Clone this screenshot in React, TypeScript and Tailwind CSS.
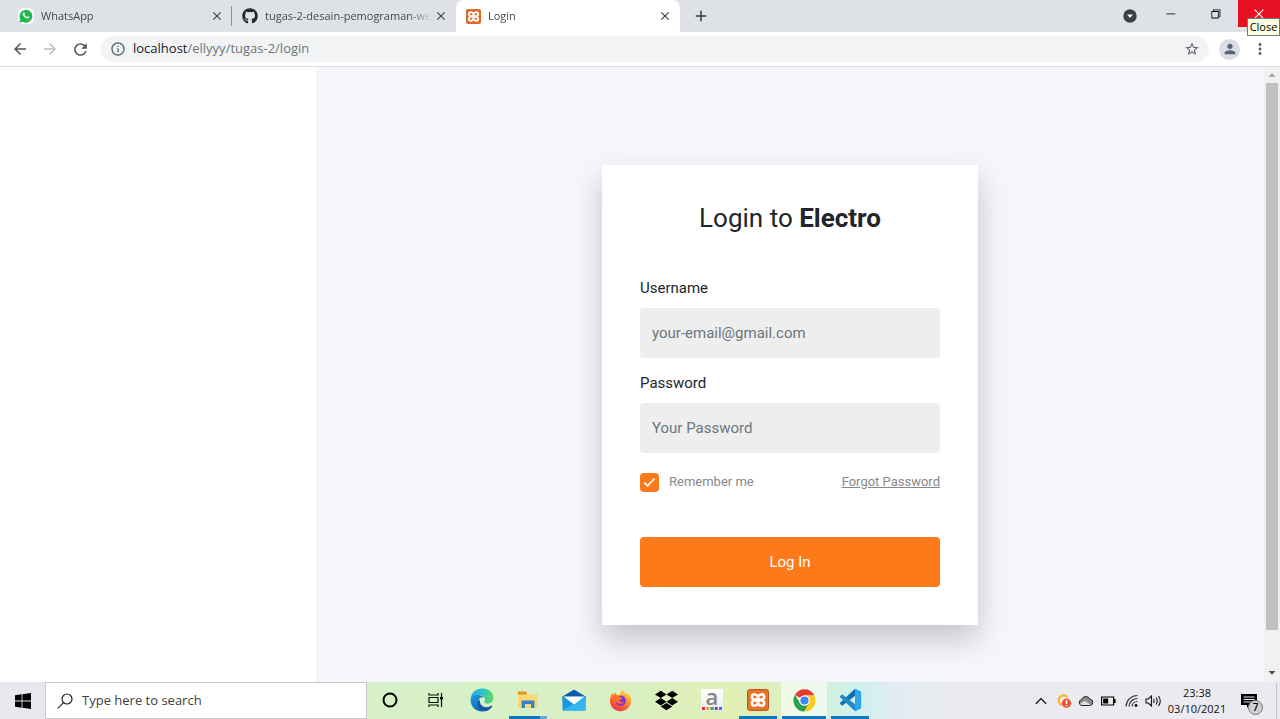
import type { ReactNode } from "react";
import {
  MdAdd,
  MdArrowBack,
  MdArrowForward,
  MdClose,
  MdInfoOutline,
  MdMoreVert,
  MdPerson,
  MdRefresh,
  MdStarBorder,
} from "react-icons/md";
import { VscChromeClose, VscChromeMinimize, VscChromeRestore } from "react-icons/vsc";
import { FaDropbox, FaGithub } from "react-icons/fa";

function WhatsAppIcon() {
  return (
    <svg viewBox="0 0 16 16" className="size-4 shrink-0">
      <rect width="16" height="16" rx="5" fill="#fff" />
      <path d="M1.3 14.8l1-3.6A6.4 6.4 0 1 1 4.8 13.8z" fill="#1fb84a" />
      <path
        d="M5.4 4.4c.4-.4.9-.3 1 0l.6 1.3c.1.3-.6.9-.5 1.1.5 1 1.3 1.700 2.300 2.100.3.1.8-.9 1.100-.7l1.300.6c.4.200.1 1-.3 1.300-.8.6-1.800.5-3-.1C6.300 9.200 5.200 8 4.800 6.700c-.3-1 0-1.800.6-2.300z"
        fill="#fff"
      />
    </svg>
  );
}

function XamppIcon({ large = false }: { large?: boolean }) {
  return (
    <span
      className={
        large
          ? "flex size-[22px] items-center justify-center rounded-[3px] border border-[#b9551c] bg-[#ea7426]"
          : "flex size-[15px] shrink-0 items-center justify-center rounded-[2px] bg-[#dd6b26]"
      }
    >
      <svg viewBox="0 0 22 22" className="size-full" fill="none" stroke="#fff" strokeWidth="2.8" strokeLinejoin="round">
        <path d="M8.200 11H6.800Q4.200 9.800 4.200 7.400 4.300 4.700 7 4.600 9 4.600 11 7 13 4.600 15 4.600 17.700 4.700 17.800 7.400 17.800 9.800 15.200 11 17.800 12.200 17.800 14.600 17.700 17.300 15 17.400 13 17.400 11 15 9 17.400 7 17.400 4.300 17.300 4.200 14.600 4.200 12.200 6.800 11M13.800 11h1.400M8.500 8.800Q11 12.200 13.500 8.800M8.500 13.200Q11 9.800 13.500 13.200" />
      </svg>
    </span>
  );
}

function Tab({ icon, title, active = false, divider = false }: { icon: ReactNode; title: string; active?: boolean; divider?: boolean }) {
  return (
    <div
      className={
        active
          ? "flex h-8 w-56 items-center rounded-t-lg bg-white pr-[7px] pl-[10px]"
          : "flex h-8 w-56 items-center pr-[7px] pl-[10px]"
      }
    >
      <button className="flex min-w-0 flex-1 items-center gap-[7px] text-left text-[11px] text-[#45494d]">
        {icon}
        <span className="flex-1 whitespace-nowrap [mask-image:linear-gradient(to_right,black_85%,transparent)]">{title}</span>
      </button>
      <button aria-label="Close tab" className="flex size-4 items-center justify-center text-[#3c4043]">
        <MdClose className="size-[14px]" />
      </button>
      {divider && <span className="-mr-[7px] ml-[6px] h-5 w-px bg-[#8d9196]" />}
    </div>
  );
}

function TabStrip() {
  return (
    <header className="flex h-8 shrink-0 items-start bg-[#dee1e6]">
      <nav className="flex pl-2">
        <Tab icon={<WhatsAppIcon />} title="WhatsApp" divider />
        <Tab icon={<FaGithub className="size-4 shrink-0 text-[#24292e]" />} title="tugas-2-desain-pemograman-we" />
        <Tab icon={<XamppIcon />} title="Login" active />
      </nav>
      <button aria-label="New tab" className="ml-[5px] flex size-8 items-center justify-center text-[#3c4043]">
        <MdAdd className="size-[18px]" />
      </button>
      <div className="ml-auto flex text-black">
        <button aria-label="Search tabs" className="flex h-8 w-9 items-center justify-center">
          <svg viewBox="0 0 14 14" className="size-[14px]">
            <circle cx="7" cy="7" r="6.7" fill="#3c4043" />
            <path d="M4 5.4h6L7 9z" fill="#fff" />
          </svg>
        </button>
        <button aria-label="Minimize" className="flex h-[27px] w-[45px] items-center justify-center">
          <VscChromeMinimize className="size-[13px]" />
        </button>
        <button aria-label="Restore" className="flex h-[27px] w-[45px] items-center justify-center">
          <VscChromeRestore className="size-[13px]" />
        </button>
        <div className="relative">
          <button aria-label="Close" className="flex h-[27px] w-[42px] items-center justify-center bg-[#e81123] text-white">
            <VscChromeClose className="size-[14px]" />
          </button>
          <span role="tooltip" className="absolute top-[18px] right-0 flex h-[18px] w-[33px] items-center justify-center border border-[#767676] bg-[#ffffe1] text-[11px] text-black">
            Close
          </span>
        </div>
      </div>
    </header>
  );
}

function Toolbar() {
  return (
    <div className="flex h-[35px] shrink-0 items-center border-b border-[#dcdee0] bg-white pr-[11px] pl-[10px] text-[#5f6368]">
      <div className="flex w-[91px] gap-[10px]">
        <button aria-label="Back" className="flex size-5 items-center justify-center text-[#50545a]">
          <MdArrowBack className="size-[18px]" />
        </button>
        <button aria-label="Forward" className="flex size-5 items-center justify-center text-[#babcbe]">
          <MdArrowForward className="size-[18px]" />
        </button>
        <button aria-label="Reload" className="flex size-5 items-center justify-center text-[#50545a]">
          <MdRefresh className="size-[19px]" />
        </button>
      </div>
      <div className="flex h-[26px] flex-1 items-center gap-[7px] rounded-full bg-[#f1f3f4] px-[9px]">
        <MdInfoOutline className="size-4" />
        <a href="#login" className="flex-1 text-[13px] text-[#70757a]">
          <span className="text-[#202124]">localhost</span>/ellyyy/tugas-2/login
        </a>
        <button aria-label="Bookmark this page">
          <MdStarBorder className="size-4" />
        </button>
      </div>
      <button aria-label="Profile" className="ml-[10px] flex size-[21px] items-center justify-center rounded-full bg-[#dadde3] text-[#56627a]">
        <MdPerson className="size-4" />
      </button>
      <button aria-label="Menu" className="ml-[11px]">
        <MdMoreVert className="size-[18px]" />
      </button>
    </div>
  );
}

function Field({ id, label, type, placeholder }: { id: string; label: string; type: string; placeholder: string }) {
  return (
    <div className="mb-[14px]">
      <label htmlFor={id} className="mb-2 block text-[15px] leading-[23px] text-[#212529]">
        {label}
      </label>
      <input
        id={id}
        type={type}
        placeholder={placeholder}
        className="block h-[50px] w-full rounded bg-[#eeeeee] px-3 text-[15px] text-[#495057] outline-none placeholder:text-[#6c757d]"
      />
    </div>
  );
}

function LoginCard() {
  return (
    <form className="w-[376px] bg-white p-[38px] font-['Roboto',sans-serif] shadow-[0_14px_28px_0_rgba(0,0,0,0.2)]">
      <h1 className="mb-[43px] text-center text-[26px] leading-[31px] text-[#212529]">
        Login to <strong className="font-bold">Electro</strong>
      </h1>
      <Field id="username" label="Username" type="text" placeholder="your-email@gmail.com" />
      <Field id="password" label="Password" type="password" placeholder="Your Password" />
      <div className="mt-[19px] mb-[45px] flex items-center justify-between text-[13px] leading-5 text-[#888888]">
        <label htmlFor="remember" className="flex items-center gap-[10px]">
          <span className="grid size-[19px]">
            <input id="remember" type="checkbox" defaultChecked className="peer col-start-1 row-start-1 size-[19px] appearance-none rounded bg-[#e6e6e6] checked:bg-[#fd7a1b]" />
            <svg viewBox="0 0 19 19" className="pointer-events-none invisible col-start-1 row-start-1 peer-checked:visible" fill="none" stroke="#fff" strokeWidth="1.8">
              <path d="M4.300 9.600l3.300 3.200 7-7.300" />
            </svg>
          </span>
          Remember me
        </label>
        <a href="#forgot" className="underline">
          Forgot Password
        </a>
      </div>
      <button type="button" className="h-[50px] w-full rounded bg-[#fd7a1b] text-[15px] text-white">
        Log In
      </button>
    </form>
  );
}

function ScrollBar() {
  return (
    <div className="flex w-4 flex-col items-center bg-[#f1f1f1]">
      <svg viewBox="0 0 16 16" className="size-4">
        <path d="M4.500 10L8 6.200 11.500 10z" fill="#a3a3a3" />
      </svg>
      <div className="w-3 flex-[547] bg-[#c1c1c1]" />
      <div className="flex-[36]" />
      <svg viewBox="0 0 16 16" className="size-4">
        <path d="M4.500 5L8 8.800 11.500 5z" fill="#505050" />
      </svg>
    </div>
  );
}

function TaskButton({ label, children, state = "idle" }: { label: string; children: ReactNode; state?: "idle" | "open" | "grouped" | "active" }) {
  return (
    <button
      aria-label={label}
      className={state === "active" ? "flex w-[46px] flex-col items-center bg-white/60" : "flex w-[46px] flex-col items-center"}
    >
      <span className="flex flex-1 items-center justify-center pt-[2px]">{children}</span>
      {state === "idle" && <span className="h-[3px]" />}
      {state === "open" && <span className="h-[3px] w-[38px] bg-[#0f76bf]" />}
      {state === "active" && <span className="h-[3px] w-[44px] bg-[#0f76bf]" />}
      {state === "grouped" && (
        <span className="flex h-[3px] w-[38px]">
          <span className="flex-1 bg-[#0f76bf]" />
          <span className="w-[7px] bg-[#6fa8cf]" />
        </span>
      )}
    </button>
  );
}

function EdgeIcon() {
  return (
    <svg viewBox="0 0 24 24" className="size-6">
      <defs>
        <linearGradient id="edge-top" x1="0" y1="0.4" x2="1" y2="0.5">
          <stop offset="0" stopColor="#2a9fe0" />
          <stop offset="0.5" stopColor="#2dc3cf" />
          <stop offset="1" stopColor="#5fd958" />
        </linearGradient>
        <linearGradient id="edge-low" x1="0" y1="0" x2="1" y2="1">
          <stop offset="0" stopColor="#1b9de2" />
          <stop offset="1" stopColor="#124f9c" />
        </linearGradient>
      </defs>
      <path d="M.6 11.500C1 5 6 .6 12.200.6c6.500 0 11.200 4.200 11.200 9.200 0 3.700-2.700 5.800-5.600 5.800-2.500 0-3.600-.7-3.600-1.500 0-.6.9-.9.900-2.600 0-2.200-2.200-4.400-6-4.400C4.800 7.100 1.800 9 .6 11.500z" fill="url(#edge-top)" />
      <path d="M.6 12C.8 8.800 4 6.800 8.300 7c2.500.1 4.700 1.100 5.900 2.600-2.700-1.100-5.700.6-5.700 3.800 0 3.500 3.300 6.200 7.200 6.200 2.300 0 4.200-.6 5.800-1.800.5-.3.900.1.600.6-2 3.100-5.500 5-9.900 5C5.700 23.400.4 18.500.6 12z" fill="url(#edge-low)" />
      <path d="M10 11.500c-.9 4.900 3 8.100 7 7.800 1.800-.1 3.200-.6 4.500-1.500.5-.3.900.1.600.6-1.700 2.700-4.500 4.300-7.600 4.700-4.400-.5-7.500-4-6.900-8.100.2-1.500 1-2.800 2.400-3.500z" fill="#1658a5" />
    </svg>
  );
}

function ExplorerIcon() {
  return (
    <svg viewBox="0 0 22 20" className="h-5 w-[22px]">
      <path d="M1 2.500h8l1.500 2H21v12H1z" fill="#f8c64b" />
      <path d="M1 1.500h8.500v3H1z" fill="#d99a1e" />
      <path d="M1 5h20v13H1z" fill="#ffd975" />
      <path d="M4.500 18v-6.500q0-1 1-1h11q1 0 1 1V18h-3.500v-4h-6v4z" fill="#3283c9" />
    </svg>
  );
}

function MailIcon() {
  return (
    <svg viewBox="0 0 24 22" className="h-[22px] w-6">
      <path d="M.5 7.500L12 .5l11.500 7V12H.5z" fill="#0b5cab" />
      <path d="M.5 7.800h23V21.500H.5z" fill="#1c96e0" />
      <path d="M.5 21.500L23.500 7.800v13.700z" fill="#35b4f0" />
      <path d="M1.500 7.500h21L12 15.500z" fill="#fff" />
    </svg>
  );
}

function FirefoxIcon() {
  return (
    <svg viewBox="0 0 24 24" className="size-[23px]">
      <defs>
        <linearGradient id="fox" x1="0.8" y1="0" x2="0.2" y2="1">
          <stop offset="0" stopColor="#ffe145" />
          <stop offset="0.45" stopColor="#ff8a25" />
          <stop offset="1" stopColor="#f0234f" />
        </linearGradient>
      </defs>
      <path d="M14.500.8c.6 2.300 2.200 3.200 3.700 4.700 1.100-.2 1.100-1 .9-1.800 2.700 2 4 5.300 4 8.600 0 6-5 10.900-11.100 10.900S1 18.300 1 12.300c0-3.200 1.200-6.400 2.600-8.200l.6 2.100C5.300 4.700 6 4.200 7.300 3.400 7.200 4.600 7.500 5.500 8.300 6h3.600C12 4 12.700 2 14.500.8z" fill="url(#fox)" />
      <circle cx="12.300" cy="12.200" r="5.400" fill="#7b35d6" />
      <path d="M4 7.500c2.500-1.700 5.500-1 7.600.7 1 .8 2.200.7 2.400 1.100.2.800-1.600 1.500-2.600 2-.6.300-.2 2.200 1.600 2.500 1.200.2 2-.4 2.800-.6-.8 1.800-2.300 2.500-4.300 2.200C7.800 15 5 12 4 7.500z" fill="#ff6a2b" />
    </svg>
  );
}

function ChromeIcon() {
  return (
    <svg viewBox="0 0 24 24" className="size-[23px]">
      <path d="M12 12L2 6.200A11.500 11.500 0 0 1 22 6.200L22.200 6.700H12z" fill="#e33b2e" />
      <path d="M12 12l0-5.300h10.200A11.500 11.500 0 0 1 11.900 23.500z" fill="#fbc918" />
      <path d="M12 12l4.600 2.700-5 8.800A11.500 11.500 0 0 1 2 6.200l5.400 8.500z" fill="#2b9f49" />
      <circle cx="12" cy="12" r="5.500" fill="#fff" />
      <circle cx="12" cy="12" r="4.300" fill="#4285f4" />
    </svg>
  );
}

function VsCodeIcon() {
  return (
    <svg viewBox="0 0 24 24" className="size-6">
      <path d="M17 .8L2.200 14.800q-.6.600 0 1.200l1.400 1.300q.6.400 1.200 0L17.500 7.500z" fill="#1070b3" />
      <path d="M17 23.200L2.200 9.200q-.6-.6 0-1.200l1.400-1.300q.6-.4 1.200 0L17.500 16.500z" fill="#2489ca" />
      <path d="M17 .8l5.500 2.500q.7.400.7 1.100v15.200q0 .7-.7 1.100L17 23.200z" fill="#2ba5ec" />
    </svg>
  );
}

function Tray() {
  return (
    <div className="ml-auto flex items-center text-black">
      <button aria-label="Show hidden icons" className="flex w-6 justify-center">
        <svg viewBox="0 0 12 8" className="h-2 w-3" fill="none" stroke="currentColor" strokeWidth="1.2">
          <path d="M.8 6.800L6 1.500l5.200 5.300" />
        </svg>
      </button>
      <button aria-label="Updates" className="flex w-[22px] justify-center">
        <svg viewBox="0 0 16 16" className="size-4">
          <path d="M11.500 4A5 5 0 1 0 6 12" fill="none" stroke="#f7b733" strokeWidth="2.2" />
          <circle cx="10.500" cy="10.200" r="4.600" fill="#ee5430" />
          <path d="M10.500 7.300v3.600m0 1v1.400" stroke="#fff" strokeWidth="1.5" />
        </svg>
      </button>
      <button aria-label="OneDrive" className="flex w-[22px] justify-center">
        <svg viewBox="0 0 16 12" className="h-3 w-4">
          <path d="M4 10.500a3 3 0 0 1-.5-5.900 4.600 4.600 0 0 1 8.500-.4 3.200 3.200 0 0 1 .3 6.300z" fill="#8c8c8c" stroke="#222" />
          <path d="M1.800 9l5-3.200 6.200 4.200H4z" fill="#ddd" />
        </svg>
      </button>
      <button aria-label="Battery" className="flex w-[23px] justify-center">
        <svg viewBox="0 0 15 10" className="h-[10px] w-[15px]">
          <path d="M.6 1h12v8H.6z" fill="none" stroke="#000" strokeWidth="1.2" />
          <path d="M2.200 2.600h5v4.800h-5zM13 3h1.600v4H13z" />
        </svg>
      </button>
      <button aria-label="Network" className="flex w-[23px] justify-center">
        <svg viewBox="0 0 14 14" className="size-[14px]" fill="none" stroke="#333" strokeWidth="1.2">
          <path d="M1 12.500A11.500 11.500 0 0 1 12.500 1.500M4 12.500a8.500 8.500 0 0 1 8.500-8M7 12.500a5.500 5.500 0 0 1 5.500-5" />
          <circle cx="11" cy="11.500" r="1.400" fill="#111" stroke="none" />
        </svg>
      </button>
      <button aria-label="Volume" className="flex w-5 justify-center">
        <svg viewBox="0 0 17 14" className="h-[14px] w-[17px]" fill="none" stroke="#111" strokeWidth="1.1">
          <path d="M1 5h2.200L6.500 2v10L3.200 9H1zM8.500 5q1.200 2 0 4M11 3.500q2.500 3.500 0 7M13.500 2q3.500 5 0 10" />
        </svg>
      </button>
      <div className="w-[68px] text-center text-[11px] leading-4 text-[#111]">
        <div>23:38</div>
        <div>03/10/2021</div>
      </div>
      <button aria-label="Notifications" className="relative ml-[10px] flex w-6 justify-start">
        <svg viewBox="0 0 16 16" className="size-4">
          <path d="M0 1h16v11H9l-3 3v-3H0z" />
          <path d="M2.500 4h11M2.500 6.500h11M2.500 9h11" stroke="#e8e8ec" />
        </svg>
        <span className="absolute top-[7px] left-[7px] flex size-[15px] items-center justify-center rounded-full border border-[#777] bg-[#d0d0d2] text-[10px] font-semibold">7</span>
      </button>
      <span className="mr-[3px] ml-[11px] h-9 w-px bg-[#c4c4c8]" />
    </div>
  );
}

function Taskbar() {
  return (
    <footer className="flex h-[37px] shrink-0 bg-[#ededf0]">
      <button aria-label="Start" className="flex w-[45px] items-center justify-center bg-[#e7e8ee]">
        <svg viewBox="0 0 16 16" className="size-4">
          <path d="M0 2.200l6.600-.9v6.300H0zM7.400 1.200L16 0v7.600H7.400zM0 8.400h6.600v6.300L0 13.800zM7.400 8.400H16V16l-8.600-1.200z" />
        </svg>
      </button>
      <label htmlFor="search" className="flex w-[322px] items-center gap-[9px] border border-[#c8c8c8] bg-white pl-[11px]">
        <svg viewBox="0 0 16 16" className="size-4" fill="none" stroke="#222" strokeWidth="1.2">
          <circle cx="10" cy="6" r="5" />
          <path d="M6.500 9.600L.8 15.300" />
        </svg>
        <input id="search" type="search" placeholder="Type here to search" className="min-w-0 flex-1 text-[13px] outline-none placeholder:text-[#404040]" />
      </label>
      <div className="flex flex-1 bg-[linear-gradient(to_right,#d7f0c8_0%,#d9f0c4_28%,#e2efb4_40%,#dcefc0_46%,#d2f1e2_51%,#d0f0ee_54%,#e2ebf1_58%,#ebebef_64%)]">
        <TaskButton label="Cortana">
          <svg viewBox="0 0 16 16" className="size-4" fill="none" stroke="#000" strokeWidth="2">
            <circle cx="8" cy="8" r="6.500" />
          </svg>
        </TaskButton>
        <TaskButton label="Task view">
          <svg viewBox="0 0 16 16" className="size-4" fill="none" stroke="#111" strokeWidth="1.2">
            <path d="M1 1v2h9V1M1 15v-2h9v2M1 5.500h9v5H1zM13.500 1v14" />
            <path d="M12 5h3v2.500h-3z" fill="#111" stroke="none" />
          </svg>
        </TaskButton>
        <TaskButton label="Edge"><EdgeIcon /></TaskButton>
        <TaskButton label="File Explorer" state="grouped"><ExplorerIcon /></TaskButton>
        <TaskButton label="Mail"><MailIcon /></TaskButton>
        <TaskButton label="Firefox"><FirefoxIcon /></TaskButton>
        <TaskButton label="Dropbox"><FaDropbox className="size-[23px] text-black" /></TaskButton>
        <TaskButton label="Amazon">
          <span className="flex size-[22px] flex-col items-center justify-between bg-[linear-gradient(#ffffff,#e9e9ec)]">
            <span className="text-[22px] leading-[14px] font-semibold text-[#858585]">a</span>
            <svg viewBox="0 0 22 5" className="h-[5px] w-[22px]">
              <path d="M1 1h3v3H1z" fill="#e0245e" />
              <path d="M5.300 1h3v3h-3z" fill="#f0a020" />
              <path d="M9.500 1h3v3h-3z" fill="#2fa84f" />
              <path d="M13.700 1h3v3h-3z" fill="#8044b0" />
              <path d="M18 1h3v3h-3z" fill="#2f7ddb" />
            </svg>
          </span>
        </TaskButton>
        <TaskButton label="XAMPP" state="open"><XamppIcon large /></TaskButton>
        <TaskButton label="Chrome" state="active"><ChromeIcon /></TaskButton>
        <TaskButton label="Visual Studio Code" state="open"><VsCodeIcon /></TaskButton>
        <Tray />
      </div>
    </footer>
  );
}

export default function App() {
  return (
    <div className="flex h-screen flex-col overflow-hidden bg-white font-['Open_Sans','Noto_Sans',sans-serif]">
      <TabStrip />
      <Toolbar />
      <div className="flex min-h-0 flex-1">
        <main className="flex min-w-0 flex-1">
          <aside className="w-1/4 bg-white" />
          <section className="flex flex-1 items-center justify-center bg-[#f5f6fc] pt-[41px]">
            <LoginCard />
          </section>
        </main>
        <ScrollBar />
      </div>
      <Taskbar />
    </div>
  );
}
